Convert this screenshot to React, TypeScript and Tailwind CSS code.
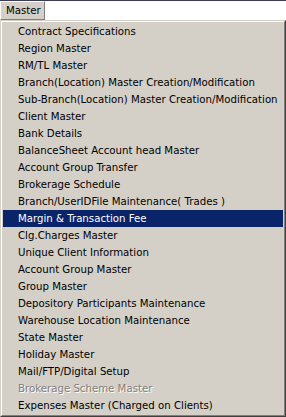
import React from 'react';

const items = [
  'Contract Specifications',
  'Region Master',
  'RM/TL Master',
  'Branch(Location) Master Creation/Modification',
  'Sub-Branch(Location) Master Creation/Modification',
  'Client Master',
  'Bank Details',
  'BalanceSheet Account head Master',
  'Account Group Transfer',
  'Brokerage Schedule',
  'Branch/UserIDFile Maintenance( Trades )',
  'Margin & Transaction Fee',
  'Clg.Charges Master',
  'Unique Client Information',
  'Account Group Master',
  'Group Master',
  'Depository Participants Maintenance',
  'Warehouse Location Maintenance',
  'State Master',
  'Holiday Master',
  'Mail/FTP/Digital Setup',
  'Brokerage Scheme Master',
  'Expenses Master (Charged on Clients)',
];

const active = 'Margin & Transaction Fee';
const disabled = 'Brokerage Scheme Master';

export default function App() {
  return (
    <div
      className="w-[286px] h-[417px] overflow-hidden bg-[#d4d0c8] text-[10.2px] text-black flex flex-col"
      style={{ fontFamily: '"DejaVu Sans", Verdana, sans-serif' }}
    >
      {/* menu bar */}
      <div className="h-[20px] flex border-t border-[#3c3c58] shrink-0">
        <div className="w-[45px] flex items-center pl-[5px] bg-[#d4d0c8] border-t border-l border-white border-r border-b border-r-[#808080] border-b-[#808080]">
          Master
        </div>
        <div className="flex-1 bg-white" />
      </div>

      {/* dropdown */}
      <div className="flex-1 border border-[#d4d0c8] border-r-[#404040] border-b-[#404040]">
        <div className="h-full border border-white border-r-[#808080] border-b-[#808080] p-px">
          {items.map((label) => {
            const isActive = label === active;
            const isDisabled = label === disabled;
            return (
              <div
                key={label}
                className={`h-[17px] flex items-center pl-[15px] whitespace-nowrap ${
                  isActive ? 'bg-[#0a246a] text-white' : isDisabled ? 'text-[#808080] [text-shadow:1px_1px_0_#fff]' : ''
                }`}
              >
                {label}
              </div>
            );
          })}
        </div>
      </div>
    </div>
  );
}
